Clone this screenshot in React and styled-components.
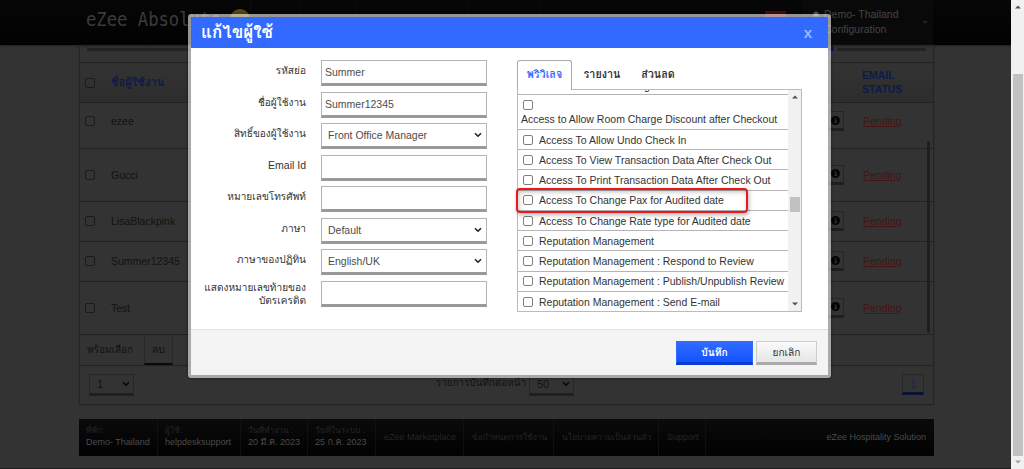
import React from 'react';
import styled, { createGlobalStyle, css } from 'styled-components';

const GlobalStyle = createGlobalStyle`
  * {
    box-sizing: border-box;
  }
  body {
    margin: 0;
    overflow: hidden;
    background: #333333;
    font-family: "Liberation Sans", Tahoma, Loma, Waree, Garuda, "Noto Sans Thai Looped", "Noto Sans Thai", sans-serif;
    font-size: 10.5px;
    color: #121212;
  }
`;

const Screen = styled.div`
  display: flex;
  width: 1024px;
  height: 469px;
  overflow: hidden;
`;

const Page = styled.div`
  display: flex;
  flex-direction: column;
  width: 1011px;
  height: 469px;
  border-bottom: 1px solid #1c1c1c;
`;

const TopBar = styled.header`
  display: flex;
  flex-shrink: 0;
  height: 45px;
  padding-left: 86px;
  background: linear-gradient(#060606, #020202);
  box-shadow: 0 1px 2px rgba(0, 0, 0, 0.4);
`;

const Brand = styled.div`
  width: 144px;
  padding-top: 7px;
  font-family: "DejaVu Sans Mono", monospace;
  font-size: 20px;
  line-height: 24px;
  color: #3b3b3b;
  white-space: nowrap;
  transform: scaleX(0.86);
  transform-origin: 0 0;
`;

const Coin = styled.div`
  width: 20px;
  height: 20px;
  margin-top: 9px;
  border-radius: 50%;
  background: #57480f;
`;

const NavCell = styled.div`
  width: ${(props) => props.w}px;
  border-right: 1px solid ${(props) => (props.last ? 'transparent' : '#0c0c0c')};
`;

const Alert = styled.div`
  width: 21px;
  height: 12px;
  margin: 11px 16px 0 0;
  background: #4a0b0b;
`;

const Account = styled.div`
  display: flex;
  width: 131px;
  padding: 7px 5px 0 10px;
  background: #090909;
  color: #454545;
  line-height: 15px;
  svg {
    margin: 4px 4px 0 0;
  }
`;

const AccountName = styled.div`
  width: 98px;
`;

const Caret = styled.span`
  align-self: flex-start;
  margin-top: 14px;
  border: 3px solid transparent;
  border-top-color: #222222;
`;

const Content = styled.main`
  width: 855px;
  margin-left: 79px;
  border: 1px solid #252525;
  border-top: 0;
  box-shadow: 0 0 1px #222222;
`;

const FilterBar = styled.div`
  display: flex;
  gap: 3px;
  height: 17px;
  padding: 0 7px;
`;

const FilterBox = styled.div`
  width: ${(props) => props.w}px;
  height: 6px;
  border: 1px solid #262626;
  border-bottom: 3px solid #222222;
  border-top: 0;
  ${(props) =>
    props.joined &&
    css`
      margin-left: -4px;
    `}
  ${(props) =>
    props.search &&
    css`
      margin-left: auto;
      border: 0;
      background: #0a1a4a;
    `}
`;

const Row = styled.div`
  display: flex;
  align-items: center;
  height: ${(props) => props.h}px;
  border-top: 1px solid #222222;
  padding-left: 5px;
  padding-bottom: ${(props) => props.lift || 0}px;
  ${(props) =>
    props.head &&
    css`
      background: linear-gradient(#333333, #2d2d2d);
      color: #0e1a48;
      font-weight: bold;
      line-height: 13.5px;
    `}
`;

const Check = styled.input.attrs({ type: 'checkbox' })`
  appearance: none;
  flex-shrink: 0;
  width: 10px;
  height: 10px;
  margin: 0;
  border: 1px solid ${(props) => (props.dim ? '#1b1b1b' : '#808080')};
  border-radius: 2px;
`;

const Name = styled.div`
  width: 649px;
  padding-left: 16px;
`;

const InfoButton = styled.div`
  display: flex;
  justify-content: flex-end;
  width: 100px;
  div {
    display: flex;
    align-items: center;
    justify-content: center;
    width: 18px;
    height: 20px;
    border: 1px solid #262626;
    border-bottom: 3px solid #1f1f1f;
  }
`;

const Status = styled.div`
  padding-left: 18px;
  ${(props) =>
    props.link &&
    css`
      padding-left: 19px;
      color: #471414;
      text-decoration: underline;
    `}
`;

const TableBody = styled.div`
  position: relative;
`;

const TableScroll = styled.div`
  position: absolute;
  right: 3px;
  top: 39px;
  width: 3px;
  bottom: 1px;
  border-radius: 2px;
  background: #1f1f1f;
`;

const BulkBar = styled.div`
  display: flex;
  height: 31px;
  border-top: 1px solid #222222;
`;

const BulkLabel = styled.div`
  width: 64px;
  padding: 6px 0 0 7px;
  line-height: 17px;
  white-space: nowrap;
`;

const DeleteButton = styled.div`
  width: 29px;
  border: 1px solid #282828;
  border-top: 0;
  border-bottom: 2px solid #0a0a0a;
  padding-top: 6px;
  line-height: 17px;
  text-align: center;
`;

const Pager = styled.div`
  display: flex;
  align-items: flex-start;
  height: 39px;
  padding: 8px 9px 0;
  border-top: 1px solid #222222;
`;

const SmallSelect = styled.div`
  display: flex;
  align-items: center;
  justify-content: space-between;
  width: 45px;
  height: 22px;
  padding: 0 3px 0 7px;
  border: 1px solid #272727;
  border-bottom: 3px solid #202020;
  font-size: 11px;
`;

const PerPage = styled.div`
  flex: 1;
  display: flex;
  justify-content: flex-start;
  padding-left: 302px;
  line-height: 18px;
  white-space: nowrap;
  > span {
    width: 93px;
  }
`;

const PageNumber = styled.div`
  width: 22px;
  height: 21px;
  border: 1px solid #272727;
  border-bottom: 3px solid #0b1434;
  color: #15225a;
  font-size: 11px;
  line-height: 18px;
  text-align: center;
`;

const Footer = styled.footer`
  display: flex;
  width: 855px;
  height: 37px;
  margin: 14px 0 0 79px;
  background: linear-gradient(#0a0a0a, #020202);
  color: #252525;
  font-size: 9px;
  white-space: nowrap;
`;

const FootCell = styled.div`
  width: ${(props) => props.w}px;
  padding: 5px 0 0 7px;
  border-right: 1px solid #101010;
  line-height: 12px;
  b {
    display: block;
    color: #4b4b4b;
    font-weight: normal;
  }
`;

const FootLink = styled(FootCell)`
  padding-top: 12px;
  padding-left: 8px;
`;

const Company = styled.div`
  flex: 1;
  padding: 12px 8px 0 0;
  color: #4b4b4b;
  line-height: 12px;
  text-align: right;
`;

const Scrollbar = styled.div`
  display: flex;
  flex-direction: column;
  align-items: center;
  justify-content: space-between;
  width: 13px;
  height: ${(props) => props.h};
  flex-shrink: 0;
  padding: ${(props) => props.pad};
  background: #f1f1f1;
`;

const Thumb = styled.div`
  width: 10px;
  height: ${(props) => props.h}px;
  margin-top: ${(props) => props.top}px;
  margin-bottom: auto;
  background: #c1c1c1;
`;

const Modal = styled.div`
  position: fixed;
  left: 188px;
  top: 14px;
  width: 643px;
  height: 364px;
  border: 3px solid rgba(255, 255, 255, 0.58);
  border-radius: 3px;
  box-shadow: 0 0 3px rgba(0, 0, 0, 0.5);
`;

const ModalInner = styled.div`
  display: flex;
  flex-direction: column;
  height: 100%;
  background: #ffffff;
`;

const ModalHead = styled.div`
  display: flex;
  justify-content: space-between;
  height: 31px;
  padding: 0 16px 0 10px;
  background: #326aff;
  color: #ffffff;
  font-weight: bold;
  line-height: 31px;
`;

const Close = styled.span`
  color: #9cb8ff;
  font-size: 15px;
  line-height: 32px;
`;

const ModalBody = styled.div`
  display: flex;
  height: 281px;
  padding-top: 12px;
`;

const Form = styled.div`
  display: flex;
  flex-direction: column;
  gap: 5.5px;
  width: 326px;
`;

const Field = styled.label`
  display: flex;
  height: 26px;
  color: #333333;
`;

const FieldLabel = styled.span`
  width: 115px;
  margin-right: 15px;
  padding-top: ${(props) => (props.two ? 0 : 4)}px;
  line-height: 13.5px;
  text-align: right;
  white-space: pre;
  font-size: ${(props) => (props.latin ? 10.5 : 10.1)}px;
`;

const Value = styled.div`
  display: flex;
  align-items: center;
  justify-content: space-between;
  width: 166px;
  height: 26px;
  padding: 0 4px 0 ${(props) => (props.select ? 6 : 3)}px;
  border: 1px solid #b4b4b4;
  border-bottom: 3px solid #999999;
  color: #4c4c4c;
`;

const Rights = styled.div`
  width: 286px;
`;

const Tabs = styled.div`
  display: flex;
  height: 29px;
`;

const Tab = styled.div`
  width: ${(props) => props.w}px;
  height: 30px;
  border: 1px solid transparent;
  border-bottom: 0;
  border-radius: 3px 3px 0 0;
  color: #333333;
  font-size: 10.8px;
  font-weight: bold;
  line-height: 27px;
  text-align: center;
  ${(props) =>
    props.active &&
    css`
      z-index: 1;
      border-color: #aaaaaa;
      background: #ffffff;
      color: #326aff;
    `}
`;

const ListBox = styled.div`
  position: relative;
  display: flex;
  width: 285px;
  height: 223px;
  border: 1px solid #bbbbbb;
`;

const List = styled.div`
  width: 270px;
  height: 221px;
  overflow: hidden;
`;

const Cut = styled.div`
  display: flex;
  align-items: flex-end;
  height: 5.4px;
  overflow: hidden;
  border-bottom: 1px solid #b5b5b5;
  padding: 0 0 3px 126px;
  line-height: 10px;
`;

const Right = styled.label`
  display: flex;
  align-items: center;
  height: 20.25px;
  padding-left: 5px;
  border-bottom: 1px solid #b5b5b5;
  color: #333333;
  white-space: nowrap;
  span {
    margin-left: 6px;
  }
  ${(props) =>
    props.tall &&
    css`
      flex-direction: column;
      align-items: flex-start;
      height: 34.5px;
      padding-top: 5px;
      span {
        margin: 3px 0 0 -2px;
      }
    `}
`;

const Marker = styled.div`
  position: absolute;
  left: -2px;
  top: 98px;
  width: 232px;
  height: 25px;
  border: 2px solid #e8191c;
  border-radius: 4px;
  box-shadow: 1px 2px 4px rgba(0, 0, 0, 0.3), inset 1px 2px 4px rgba(0, 0, 0, 0.25);
`;

const ModalFoot = styled.div`
  flex: 1;
  display: flex;
  justify-content: flex-end;
  gap: 3px;
  padding: 11px 11px 0 0;
  border-top: 1px solid #e3e3e3;
  background: #f4f4f4;
`;

const Button = styled.button`
  width: ${(props) => (props.primary ? 77 : 61)}px;
  height: 24px;
  padding: 0;
  border: 1px solid #cccccc;
  border-bottom: 3px solid #aaaaaa;
  background: linear-gradient(#fafafa, #e6e6e6);
  color: #333333;
  font-family: inherit;
  font-size: 10.2px;
  line-height: 19px;
  ${(props) =>
    props.primary &&
    css`
      border-color: #326aff;
      border-bottom-color: #063cd4;
      background: linear-gradient(#326aff, #1354ff);
      color: #ffffff;
      font-weight: bold;
    `}
`;

const Thai = styled.span`
  font-size: ${(props) => props.size}px;
`;

const Chevron = ({ color = '#222222' }) => (
  <svg width="8" height="6" viewBox="0 0 8 6">
    <path d="M1 1.2 4 4.2 7 1.2" fill="none" stroke={color} strokeWidth="1.6" />
  </svg>
);

const Arrow = ({ up, color = '#505050' }) => (
  <svg width="6" height="4" viewBox="0 0 6 4">
    <path d={up ? 'M0 3.5 3 .5 6 3.5z' : 'M0 .5 3 3.5 6 .5z'} fill={color} />
  </svg>
);

const InfoIcon = () => (
  <svg width="9" height="9" viewBox="0 0 9 9">
    <circle cx="4.5" cy="4.5" r="4.5" fill="#050505" />
    <path d="M3.6 4h1.3v2.5M3.4 6.6h2.4M4.1 2.3h1" stroke="#3b3b3b" fill="none" />
  </svg>
);

const users = [
  { name: 'ezee', h: 46, lift: 9 },
  { name: 'Gucci', h: 53, lift: 1 },
  { name: 'LisaBlackpink', h: 40, lift: 1 },
  { name: 'Summer12345', h: 40, lift: 1 },
  { name: 'Test', h: 53, lift: 1 },
];

const fields = [
  { label: 'รหัสย่อ', value: 'Summer' },
  { label: 'ชื่อผู้ใช้งาน', value: 'Summer12345' },
  { label: 'สิทธิ์ของผู้ใช้งาน', value: 'Front Office Manager', select: true },
  { label: 'Email Id', value: '', latin: true },
  { label: 'หมายเลขโทรศัพท์', value: '' },
  { label: 'ภาษา', value: 'Default', select: true },
  { label: 'ภาษาของปฏิทิน', value: 'English/UK', select: true },
  { label: 'แสดงหมายเลขท้ายของ\nบัตรเครดิต', value: '', two: true },
];

const rights = [
  'Access To Allow Undo Check In',
  'Access To View Transaction Data After Check Out',
  'Access To Print Transaction Data After Check Out',
  'Access To Change Pax for Audited date',
  'Access To Change Rate type for Audited date',
  'Reputation Management',
  'Reputation Management : Respond to Review',
  'Reputation Management : Publish/Unpublish Review',
  'Reputation Management : Send E-mail',
];

const Header = () => (
  <TopBar>
    <Brand>eZee Absolute</Brand>
    <Coin />
    <NavCell w={1} />
    <NavCell w={50} />
    <NavCell w={55} />
    <NavCell w={113} />
    <NavCell w={71} />
    <NavCell w={225} last />
    <Alert />
    <Account>
      <svg width="8" height="12" viewBox="0 0 8 12">
        <circle cx="4" cy="3" r="2.6" fill="#555555" />
        <path d="M0 12q0-6 4-6t4 6z" fill="#555555" />
      </svg>
      <AccountName>Demo- Thailand Configuration</AccountName>
      <Caret />
    </Account>
  </TopBar>
);

const UserTable = () => (
  <Content>
    <FilterBar>
      <FilterBox w={64} />
      <FilterBox w={64} joined />
      <FilterBox w={40} search />
      <FilterBox w={89} />
    </FilterBar>
    <Row head h={40}>
      <Check dim />
      <Name><Thai size={11.2}>ชื่อผู้ใช้งาน</Thai></Name>
      <InfoButton />
      <Status>EMAIL<br />STATUS</Status>
    </Row>
    <TableBody>
      {users.map((user) => (
        <Row key={user.name} h={user.h} lift={user.lift}>
          <Check dim />
          <Name>{user.name}</Name>
          <InfoButton>
            <div>
              <InfoIcon />
            </div>
          </InfoButton>
          <Status link>Pending</Status>
        </Row>
      ))}
      <TableScroll />
    </TableBody>
    <BulkBar>
      <BulkLabel><Thai size={10}>พร้อมเลือก</Thai></BulkLabel>
      <DeleteButton>ลบ</DeleteButton>
    </BulkBar>
    <Pager>
      <SmallSelect>1 <Chevron color="#080808" /></SmallSelect>
      <PerPage>
        <Thai size={9.9}>รายการบันทึกต่อหน้า</Thai>
        <SmallSelect>50 <Chevron color="#080808" /></SmallSelect>
      </PerPage>
      <PageNumber>1</PageNumber>
    </Pager>
  </Content>
);

const EditUser = () => (
  <Modal>
    <ModalInner>
      <ModalHead>
        <Thai size={17}>แก้ไขผู้ใช้</Thai>
        <Close>x</Close>
      </ModalHead>
      <ModalBody>
        <Form>
          {fields.map((field) => (
            <Field key={field.label}>
              <FieldLabel two={field.two} latin={field.latin}>{field.label}</FieldLabel>
              <Value select={field.select}>
                {field.value}
                {field.select && <Chevron />}
              </Value>
            </Field>
          ))}
        </Form>
        <Rights>
          <Tabs>
            <Tab active w={55}>พริวิเลจ</Tab>
            <Tab w={60}>รายงาน</Tab>
            <Tab w={52}>ส่วนลด</Tab>
          </Tabs>
          <ListBox>
            <List>
              <Cut>g</Cut>
              <Right tall>
                <Check />
                <span>Access to Allow Room Charge Discount after Checkout</span>
              </Right>
              {rights.map((right) => (
                <Right key={right}>
                  <Check />
                  <span>{right}</span>
                </Right>
              ))}
            </List>
            <Scrollbar h="221px" pad="5px 0">
              <Arrow up />
              <Thumb h={15} top={98} />
              <Arrow />
            </Scrollbar>
            <Marker />
          </ListBox>
        </Rights>
      </ModalBody>
      <ModalFoot>
        <Button primary>บันทึก</Button>
        <Button>ยกเลิก</Button>
      </ModalFoot>
    </ModalInner>
  </Modal>
);

export default function App() {
  return (
    <Screen>
      <GlobalStyle />
      <Page>
        <Header />
        <UserTable />
        <Footer>
          <FootCell w={79}><Thai size={8.4}>ที่พัก:</Thai><b>Demo- Thailand</b></FootCell>
          <FootCell w={83}><Thai size={8.4}>ผู้ใช้:</Thai><b>helpdesksupport</b></FootCell>
          <FootCell w={67}><Thai size={8.4}>วันที่ทำงาน :</Thai><b>20 มี.ค. 2023</b></FootCell>
          <FootCell w={68}><Thai size={8.4}>วันที่ในระบบ :</Thai><b>25 ก.ค. 2023</b></FootCell>
          <FootLink w={88}>eZee Marketplace</FootLink>
          <FootLink w={90}><Thai size={8.3}>ข้อกำหนดการใช้งาน</Thai></FootLink>
          <FootLink w={105}><Thai size={8.3}>นโยบายความเป็นส่วนตัว</Thai></FootLink>
          <FootLink w={47}>Support</FootLink>
          <Company>eZee Hospitality Solution</Company>
        </Footer>
      </Page>
      <Scrollbar h="469px" pad="5px 0">
        <Arrow up />
        <Thumb h={382} top={65} />
        <Arrow color="#a0a0a0" />
      </Scrollbar>
      <EditUser />
    </Screen>
  );
}
